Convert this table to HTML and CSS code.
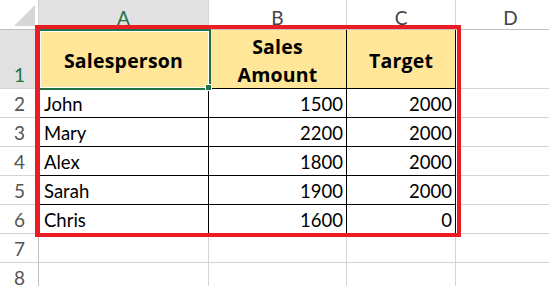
FILE: index.html
```html
<!DOCTYPE html>
<html>
<head>
<meta charset="utf-8">
<link rel="stylesheet" href="styles.css">
</head>
<body>
<div class="sheet">
  <div class="corner"><svg width="38" height="29" viewBox="0 0 38 29"><polygon points="14,26 35,26 35,5" fill="#d6d6d6"/></svg></div>
  <div class="colhead sel">A</div>
  <div class="colhead">B</div>
  <div class="colhead">C</div>
  <div class="colhead">D</div>

  <div class="rowhead sel two">1</div>
  <div class="cell t hdr a1">Salesperson<span class="selection"></span><span class="handle"></span></div>
  <div class="cell t hdr">Sales<br>Amount</div>
  <div class="cell t hdr">Target</div>
  <div class="cell"></div>

  <div class="rowhead">2</div>
  <div class="cell t">John</div>
  <div class="cell t num">1500</div>
  <div class="cell t num">2000</div>
  <div class="cell"></div>

  <div class="rowhead">3</div>
  <div class="cell t">Mary</div>
  <div class="cell t num">2200</div>
  <div class="cell t num">2000</div>
  <div class="cell"></div>

  <div class="rowhead">4</div>
  <div class="cell t">Alex</div>
  <div class="cell t num">1800</div>
  <div class="cell t num">2000</div>
  <div class="cell"></div>

  <div class="rowhead">5</div>
  <div class="cell t">Sarah</div>
  <div class="cell t num">1900</div>
  <div class="cell t num">2000</div>
  <div class="cell"></div>

  <div class="rowhead">6</div>
  <div class="cell t">Chris</div>
  <div class="cell t num">1600</div>
  <div class="cell t num">0</div>
  <div class="cell"></div>

  <div class="rowhead">7</div>
  <div class="cell"></div>
  <div class="cell"></div>
  <div class="cell"></div>
  <div class="cell"></div>

  <div class="rowhead">8</div>
  <div class="cell"></div>
  <div class="cell"></div>
  <div class="cell"></div>
  <div class="cell"></div>

  <div class="redbox"></div>
</div>
</body>
</html>
```

FILE: styles.css
```css
html, body {
  margin: 0;
  padding: 0;
  background: #fff;
  overflow: hidden;
}
body {
  width: 549px;
  height: 286px;
  font-family: Lato, "Open Sans", sans-serif;
  font-size: 18.5px;
  color: #000;
}
.sheet {
  position: relative;
  display: grid;
  grid-template-columns: 39px 170px 138px 109px 110px;
  grid-template-rows: 30px 59px repeat(7, 29px);
}
.sheet > div {
  box-sizing: border-box;
}
.corner {
  border-right: 1px solid #d4d4d4;
  border-bottom: 1px solid #c0c0c0;
  background: #fff;
}
.corner svg {
  display: block;
}
.colhead {
  border-right: 1px solid #d4d4d4;
  border-bottom: 1px solid #c0c0c0;
  text-align: center;
  color: #444;
  font-size: 19px;
  line-height: 24px;
  padding-top: 6px;
}
.colhead.sel {
  background: #e1e1e1;
  color: #217346;
  border-bottom: 2px solid #217346;
}
.rowhead {
  border-right: 1px solid #c0c0c0;
  border-bottom: 1px solid #d4d4d4;
  text-align: center;
  color: #555;
  font-size: 19px;
  line-height: 28px;
  padding-top: 1px;
  padding-left: 1px;
}
.rowhead.sel {
  background: #e1e1e1;
  color: #217346;
}
.rowhead.two {
  line-height: 20px;
  padding-top: 35px;
}
.cell {
  border-right: 1px solid #d4d4d4;
  border-bottom: 1px solid #d4d4d4;
  line-height: 28px;
  padding: 1px 3px 0 5px;
  white-space: nowrap;
}
.cell.t {
  border-right-color: #000;
  border-bottom-color: #000;
}
.cell.num {
  text-align: right;
}
.cell.hdr {
  background: #ffe699;
  font-family: "Open Sans", Lato, sans-serif;
  font-size: 19.5px;
  letter-spacing: 0.2px;
  font-weight: bold;
  text-align: center;
  display: flex;
  flex-direction: column;
  justify-content: center;
  align-items: center;
  line-height: 28px;
  padding: 3px 0 0 0;
}
.a1 {
  position: relative;
}
.selection {
  position: absolute;
  left: -1px;
  top: -1px;
  right: -3px;
  bottom: -2px;
  border: 2px solid #217346;
  box-shadow: inset 0 0 0 1px #fff;
}
.handle {
  position: absolute;
  right: -4px;
  bottom: -3px;
  width: 5px;
  height: 5px;
  background: #217346;
  border: 1px solid #fff;
}
.redbox {
  position: absolute;
  left: 35px;
  top: 25px;
  width: 426px;
  height: 212px;
  box-sizing: border-box;
  border: 4px solid #ec1c24;
  border-left-width: 5px;
  pointer-events: none;
}
```
